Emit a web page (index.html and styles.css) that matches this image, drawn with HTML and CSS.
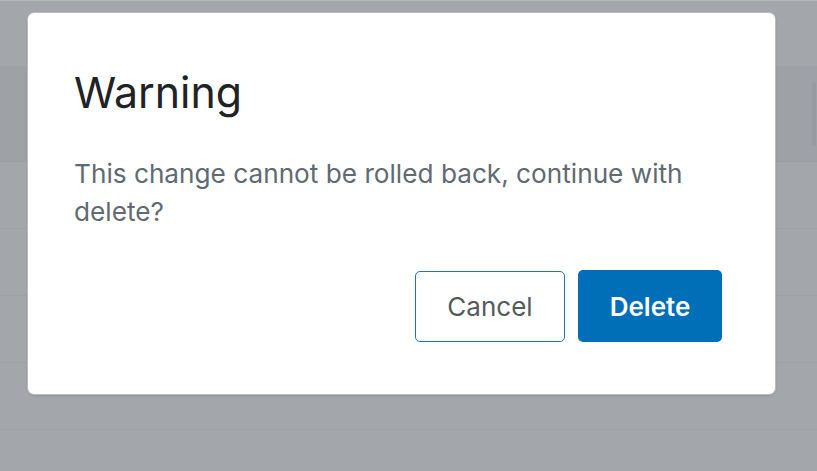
FILE: index.html
```html
<!DOCTYPE html>
<html>
<head>
<meta charset="utf-8">
<link rel="stylesheet" href="styles.css">
</head>
<body>
<div class="page">
  <div class="top"></div>
  <div class="band"></div>
  <div class="row"></div>
  <div class="row"></div>
  <div class="row"></div>
  <div class="row"></div>
  <div class="thumb"></div>
  <div class="dialog">
    <h1 class="title">Warning</h1>
    <p class="message">This change cannot be rolled back, continue with delete?</p>
    <div class="actions">
      <button class="btn btn-cancel">Cancel</button>
      <button class="btn btn-delete">Delete</button>
    </div>
  </div>
</div>
</body>
</html>
```

FILE: styles.css
```css
html, body {
  margin: 0;
  padding: 0;
}
body {
  width: 817px;
  height: 471px;
  overflow: hidden;
  background: #a3a6ab;
  font-family: Inter, "Noto Sans", sans-serif;
}
.page {
  position: relative;
  width: 817px;
  height: 471px;
  overflow: hidden;
  display: flex;
  flex-direction: column;
}
.top {
  height: 65px;
  flex: none;
  background: #a3a6ab;
  border-top: 1px solid #b4b7bb;
}
.band {
  height: 95px;
  flex: none;
  background: #9ea1a6;
  border-bottom: 1px solid #9a9da2;
}
.row {
  height: 66px;
  flex: none;
  border-bottom: 1px solid #9da0a5;
}
.thumb {
  position: absolute;
  right: 1px;
  top: 82px;
  width: 4px;
  height: 64px;
  background: #979aa0;
  border-radius: 2px;
}
.dialog {
  position: absolute;
  left: 28px;
  top: 13px;
  width: 747px;
  height: 381px;
  box-sizing: border-box;
  background: #ffffff;
  border-radius: 6px;
  box-shadow: 0 0 0 1px #b9bcc0, 0 1px 3px rgba(0, 0, 0, 0.25);
  padding: 55px 53px 52px 46px;
  display: flex;
  flex-direction: column;
}
.title {
  margin: 0;
  font-size: 42.8px;
  line-height: 50px;
  font-weight: 400;
  color: #1f2326;
}
.message {
  margin: 37px 0 0 0;
  font-size: 26.2px;
  line-height: 38.4px;
  color: #5f6a72;
}
.actions {
  margin-top: auto;
  display: flex;
  justify-content: flex-end;
  align-items: flex-end;
  gap: 13px;
}
.btn {
  font-family: Inter, "Noto Sans", sans-serif;
  font-size: 26px;
  height: 72px;
  border-radius: 5px;
  cursor: pointer;
}
.btn-cancel {
  width: 150px;
  height: 71px;
  background: #ffffff;
  border: 1.5px solid #1b75bb;
  color: #535b61;
  font-weight: 400;
}
.btn-delete {
  width: 144px;
  background: #006fb7;
  border: none;
  color: #ffffff;
  font-weight: 600;
}
```
